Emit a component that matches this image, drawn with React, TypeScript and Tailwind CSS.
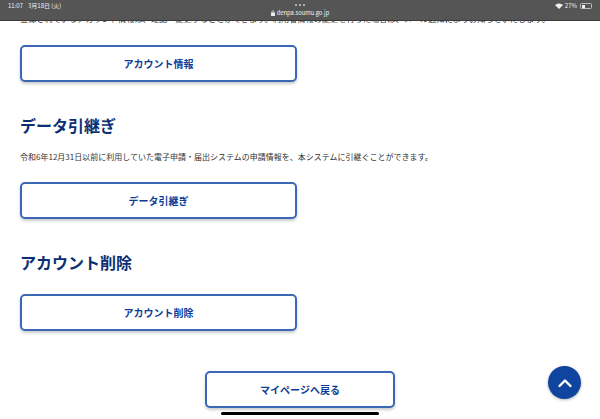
const font = { fontFamily: '"Noto Sans CJK JP", "Noto Sans", sans-serif' };

function ActionButton({ label, className = "" }: { label: string; className?: string }) {
  return (
    <button className={`flex h-[37px] items-center justify-center rounded-[5px] border-2 border-[#3a68b4] bg-white text-[10px] font-bold text-[#0f3d96] shadow-[0_2px_3px_rgba(0,0,0,0.2)] ${className}`}>
      {label}
    </button>
  );
}

function StatusBar() {
  return (
    <div className="grid h-[21px] shrink-0 grid-cols-[1fr_auto_1fr] items-start border-b border-[#3a3a3a] bg-[#555555] pl-[8px] pr-[8px] pt-[2px] text-[6px] text-[#f2f2f2]">
      <div className="flex gap-[5px] leading-[8px]">
        <span>11:07</span>
        <span>3月18日 (火)</span>
      </div>
      <div className="flex flex-col items-center">
        <div className="flex h-[6px] items-center gap-[2px]">
          <span className="h-[2px] w-[2px] rounded-full bg-[#cfcfcf]" />
          <span className="h-[2px] w-[2px] rounded-full bg-[#cfcfcf]" />
          <span className="h-[2px] w-[2px] rounded-full bg-[#cfcfcf]" />
        </div>
        <div className="mt-[1px] flex items-center gap-[2px] leading-[8px]">
          <svg width="4" height="6" viewBox="0 0 4 6"><rect y="2.5" width="4" height="3.500" rx="0.5" fill="#eee" /><path d="M1 3V1.6a1 1 0 0 1 2 0V3" fill="none" stroke="#eee" strokeWidth="0.6" /></svg>
          <span className="text-[5.8px]">denpa.soumu.go.jp</span>
        </div>
      </div>
      <div className="flex h-[8px] items-center justify-end gap-[2px] leading-[8px]">
        <svg width="8" height="6" viewBox="0 0 16 12"><path d="M8 12 0 4a11.500 11.500 0 0 1 16 0z" fill="#f2f2f2" /></svg>
        <span>27%</span>
        <div className="ml-[1px] flex h-[6px] w-[12px] items-center rounded-[1.5px] border border-[#bdbdbd] p-[0.5px]">
          <div className="h-full w-[3px] bg-[#f2f2f2]" />
        </div>
      </div>
    </div>
  );
}

export default function App() {
  return (
    <div className="relative flex h-[419px] w-[600px] flex-col overflow-hidden bg-white" style={font}>
      <StatusBar />
      <div className="flex h-[3px] shrink-0 items-end overflow-hidden pl-[20px]">
        <p className="whitespace-nowrap text-[8.2px] leading-[12px] text-[#333]">
          登録されているアカウント情報は、確認・変更することができます。利用者情報の変更を行った場合は、メール通知によりお知らせいたします。
        </p>
      </div>
      <div className="flex flex-1 flex-col px-[20px] pt-[21px]">
        <ActionButton label="アカウント情報" className="w-[277px]" />
        <h2 className="mt-[31px] text-[16px] font-bold leading-[24px] text-[#0d2f73]">データ引継ぎ</h2>
        <p className="mt-[14px] whitespace-nowrap text-[8px] leading-[12px] text-[#333]">
          令和6年12月31日以前に利用していた電子申請・届出システムの申請情報を、本システムに引継ぐことができます。
        </p>
        <ActionButton label="データ引継ぎ" className="mt-[19px] w-[277px]" />
        <h2 className="mt-[31px] text-[16px] font-bold leading-[24px] text-[#0d2f73]">アカウント削除</h2>
        <ActionButton label="アカウント削除" className="mt-[20px] w-[277px]" />
        <ActionButton label="マイページへ戻る" className="mt-[40px] w-[190px] self-center" />
      </div>
      <button className="absolute left-[548px] top-[366px] flex h-[33px] w-[33px] items-center justify-center rounded-full bg-[#0f459f] shadow-[0_1px_3px_rgba(0,0,0,0.3)]">
        <svg width="16" height="10" viewBox="0 0 16 10" fill="none"><path d="M2.500 8 8 2.500 13.500 8" stroke="#fff" strokeWidth="2.4" strokeLinecap="round" strokeLinejoin="round" /></svg>
      </button>
      <div className="absolute left-[221px] top-[412px] h-[3px] w-[158px] rounded-full bg-black" />
    </div>
  );
}
